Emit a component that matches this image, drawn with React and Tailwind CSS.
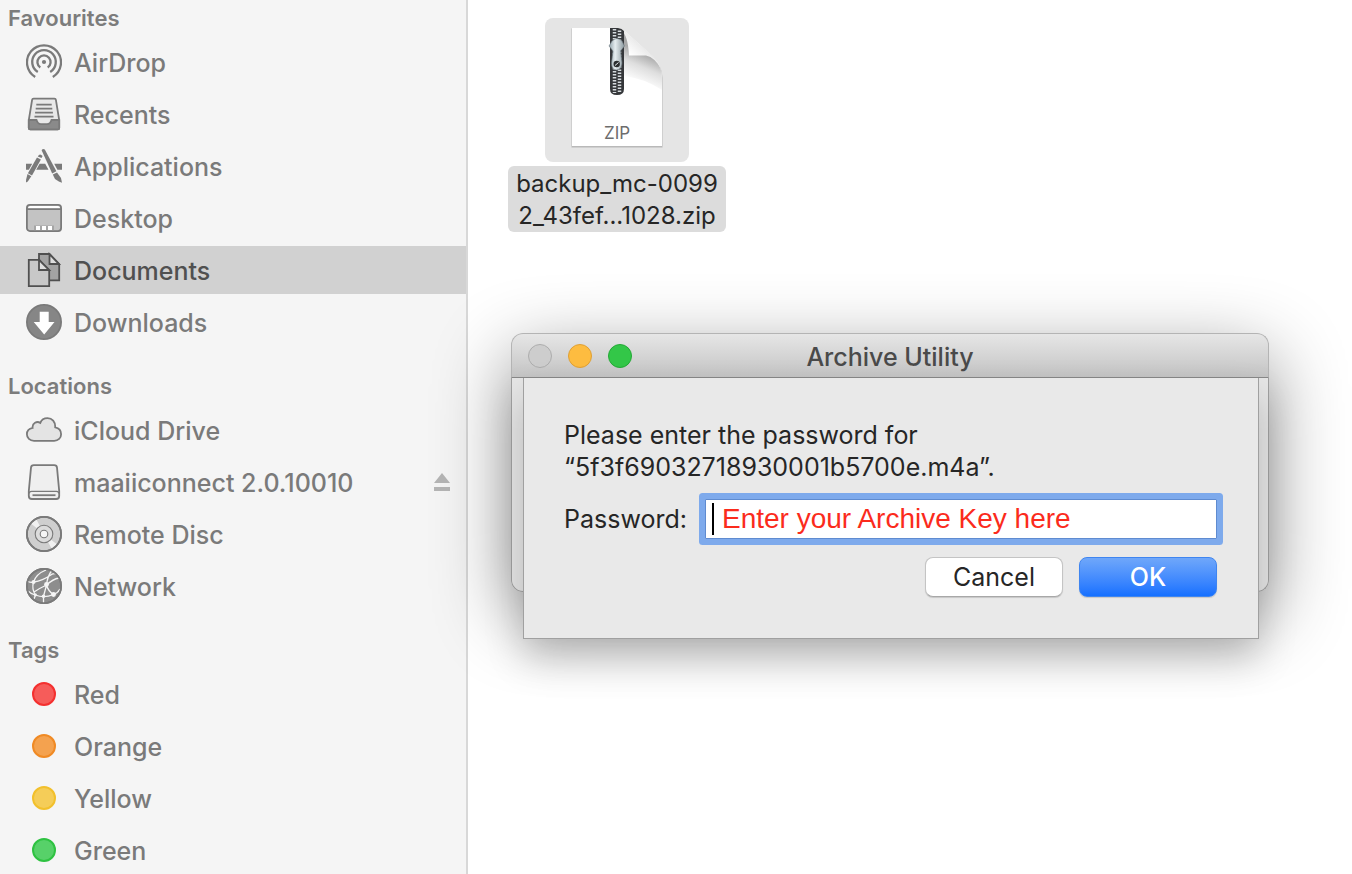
const favourites = [
  ["AirDrop", AirDropIcon],
  ["Recents", RecentsIcon],
  ["Applications", ApplicationsIcon],
  ["Desktop", DesktopIcon],
  ["Documents", DocumentsIcon],
  ["Downloads", DownloadsIcon]
];

const locations = [
  ["iCloud Drive", CloudIcon],
  ["maaiiconnect 2.0.10010", DriveIcon],
  ["Remote Disc", DiscIcon],
  ["Network", NetworkIcon]
];

const tags = [
  ["Red", "border-[#f4302f] bg-[#f65c5a]"],
  ["Orange", "border-[#f08a24] bg-[#f4a24f]"],
  ["Yellow", "border-[#f2c02c] bg-[#f5cd58]"],
  ["Green", "border-[#2ec241] bg-[#57d169]"]
];

function Icon({ children }) {
  return (
    <svg viewBox="0 0 36 36" className="size-9 shrink-0" fill="none" stroke="currentColor" strokeWidth="1.8" aria-hidden="true">
      {children}
    </svg>
  );
}

function AirDropIcon() {
  return (
    <Icon>
      <g strokeWidth="2.3">
        <path d="M9.2 32.9A17 17 0 1 1 26.8 32.9" />
        <path d="M11.8 28A11.8 11.8 0 1 1 24.2 28" />
        <path d="M14.3 23.5A6.6 6.6 0 1 1 21.7 23.5" />
      </g>
      <circle cx="18" cy="18" r="2.1" fill="currentColor" stroke="none" />
    </Icon>
  );
}

function RecentsIcon() {
  return (
    <Icon>
      <path d="M7.5 2.6h21q1.2 0 1.4 1.2L33.2 24v8q0 1.4-1.4 1.4H4.2Q2.8 33.4 2.8 32V24L6.1 3.8Q6.3 2.6 7.5 2.6Z" fill="#e9e9e9" />
      <path d="M2.8 24H10.5Q11.8 28.2 15 28.2h6q3.2 0 4.5-4.2h7.7v8q0 1.4-1.4 1.4H4.2Q2.8 33.4 2.8 32Z" fill="#8a8a8a" />
      <path d="M10.3 8.7h15.4M9.7 12.7h16.6M9.1 16.7h17.8M8.5 20.7h19" />
    </Icon>
  );
}

function ApplicationsIcon() {
  return (
    <Icon>
      <g fill="currentColor" stroke="none">
        <path d="M0 15.7h6.2L2.9 21.7H0ZM13.6 15.7h5.6l3.3 6H10.2ZM28.2 15.7H36v6h-4.6Z" />
        <path d="M15.6 2.2Q17 .2 18.8 1.6L30.4 23.2 26.2 25.5Z" />
        <path d="M26.8 26.6 31 24.4 35 30 36 34.8 32.8 33.4 29 31Z" />
        <path d="M12.7 7.2Q14.4 5.2 16.6 8.1L15.5 10.1 11.8 8.4Z" />
        <path d="M11 9.6 14.9 11.6 6 27.4 1.9 25.2Z" />
        <path d="M1.5 26.1 5.3 28.3 1.8 33.5 0 34.6.1 31.5Z" />
      </g>
    </Icon>
  );
}

function DesktopIcon() {
  return (
    <Icon>
      <rect x=".9" y="4.9" width="34.2" height="26.2" rx="3" fill="#c3c3c3" />
      <path d="M2 8.5Q2 6 4.5 6h27Q34 6 34 8.5Z" fill="#fff" stroke="none" />
      <path d="M1 9.2h34" />
      <path d="M8 30.2v-4.7h20v4.7Z" fill="#a5a5a5" stroke="none" />
      <path d="M10 26h4v4h-4ZM16 26h4v4h-4ZM22 26h4v4h-4Z" fill="#fff" stroke="none" />
    </Icon>
  );
}

function DocumentsIcon() {
  return (
    <Icon>
      <path d="M13 7.5V2h10.5L33.2 12v16.4H22V18Z" fill="#a3a3a3" />
      <path d="M23.5 2.2V12h9.5Z" fill="#dedede" />
      <path d="M2.8 7.8H13L23.2 18v16.2H2.8Z" fill="#c8c8c8" />
      <path d="M13 7.8V18h10.2Z" fill="#dedede" />
    </Icon>
  );
}

function DownloadsIcon() {
  return (
    <Icon>
      <circle cx="18" cy="18" r="17.1" fill="#868686" />
      <path d="M13.7 7.7h9v10.3h5.8L18.2 30.5 7.7 18h6Z" fill="#fff" stroke="none" />
    </Icon>
  );
}

function CloudIcon() {
  return (
    <Icon>
      <path
        d="M8 28.8C3.8 28.8.9 26 .9 22.3c0-3.4 2.3-5.8 5.7-6.4C6 11 11 8.7 14.3 10.9 15.5 7.7 18.3 6.1 21.5 6.1c4.6 0 8 3.6 7.7 9.2 3.8.7 5.9 3.4 5.9 6.9 0 3.8-2.9 6.6-6.9 6.6Z"
        fill="#e4e4e4"
      />
    </Icon>
  );
}

function DriveIcon() {
  return (
    <Icon>
      <path d="M7.8 1.2h20.4q2.6 0 2.8 2.4L33.2 27v5q0 3-3 3H5.8q-3 0-3-3v-5L5 3.6Q5.2 1.2 7.8 1.2Z" fill="#efefef" />
      <path d="M3 29.5Q3.2 27.3 5.5 27.3h25q2.3 0 2.5 2.2" strokeWidth="1.3" />
      <path d="M6.5 31.2h23" />
    </Icon>
  );
}

function DiscIcon() {
  return (
    <Icon>
      <circle cx="18" cy="18" r="17.1" fill="#cfcfcf" />
      <path d="M18 18 5.2 7.8 10.5 3.5ZM18 18 30.8 28.2 25.5 32.5Z" fill="#f1f1f1" stroke="none" />
      <circle cx="18" cy="18" r="17.1" />
      <circle cx="18" cy="18" r="8.8" fill="#dcdcdc" strokeWidth="1.1" />
      <circle cx="18" cy="18" r="3.8" fill="#f5f5f5" strokeWidth="1.1" />
    </Icon>
  );
}

function NetworkIcon() {
  return (
    <Icon>
      <circle cx="18" cy="18" r="17.1" fill="#8d8d8d" />
      <g stroke="#f5f5f5" strokeWidth="1.3">
        <path d="M2 13.5Q5 15 7.5 14Q10 6 20 2" />
        <path d="M7.5 14Q5.5 21 9.5 27Q18 30.5 27.5 26.5Q32 25 34 21" />
        <path d="M7.5 14Q17 12.5 24 7.5Q27 5 30 6M20.5 17Q21.5 8 25.5 3" />
        <path d="M20.5 17Q27 11 33 10M20.5 17Q22 23 27.5 26.5M20.5 17Q19 23 17.5 28.2V35M20.5 17Q14 20 8 24M2 23Q5 26 9.5 27L8 31" />
      </g>
      <g fill="#f5f5f5" stroke="none">
        <circle cx="7.5" cy="14" r="2" />
        <circle cx="20.5" cy="16.5" r="2.4" />
        <circle cx="9.5" cy="27" r="1.4" />
        <circle cx="17.5" cy="28.2" r="1.8" />
        <circle cx="27.5" cy="26.5" r="2.4" />
      </g>
      <circle cx="18" cy="18" r="17.1" />
    </Icon>
  );
}

function ZipIcon() {
  return (
    <svg viewBox="0 0 144 144" className="size-36" role="img" aria-label="ZIP archive">
      <defs>
        <linearGradient id="curl" x1="86" y1="38" x2="97" y2="26" gradientUnits="userSpaceOnUse">
          <stop offset="0" stopColor="#fff" />
          <stop offset="1" stopColor="#e8e8e8" />
        </linearGradient>
        <linearGradient id="shade" x1="102" y1="36" x2="90" y2="64" gradientUnits="userSpaceOnUse">
          <stop offset="0" stopColor="#a8a8a8" />
          <stop offset=".45" stopColor="#dedede" />
          <stop offset="1" stopColor="#fff" />
        </linearGradient>
        <linearGradient id="pull" x1="0" x2="1">
          <stop offset="0" stopColor="#8fa0a8" />
          <stop offset=".4" stopColor="#e6edf0" />
          <stop offset="1" stopColor="#8a979d" />
        </linearGradient>
      </defs>
      <path d="M26.5 10.5H72Q78 11 83 17L108 40Q117.5 48 117.5 60v69.5h-91Z" fill="#b9b9b9" />
      <path d="M27 10H72Q78 10.5 83 16L108 38.5Q117 47 117 60v68H27Z" fill="#fff" />
      <path d="M76 12Q80 13 83 17L108 39Q117 47 117 60V72Q98 60 79 58Z" fill="url(#shade)" />
      <path d="M76 12Q83 17 84 37.5L101 37.5Q110 39.5 116 51Q113.5 43.5 108 38.5L83 16Q80 13 76 12Z" fill="url(#curl)" />
      <path d="M65 10h8q4 .5 6 3v58q0 6-7 6t-7-6Z" fill="#35373a" />
      <path d="M69.5 11v64M74.5 12.5v62" stroke="#d5dadd" strokeWidth="3.5" strokeDasharray="1.5 1.5" />
      <path d="M67 23q5-5 10 0l2.5 5-4 5 1.5 12q-.5 7-5.5 7T66.5 45L68 33l-4-5Z" fill="url(#pull)" stroke="#6b777d" strokeWidth=".6" />
      <circle cx="71.7" cy="46" r="3.2" fill="#2c2e30" />
      <path d="M70 47.5 73.5 44.5" stroke="#e6edf0" />
      <text x="72" y="120.5" textAnchor="middle" className="fill-[#6d6d6d] font-['Inter',sans-serif] text-[17px]">ZIP</text>
    </svg>
  );
}

function SidebarSection({ title, children }) {
  return (
    <section>
      <h2 className="mb-0.5 flex h-9 items-center pl-2 text-[22px] font-semibold text-[#7c7c7c]">{title}</h2>
      <ul className="space-y-1">{children}</ul>
    </section>
  );
}

function SidebarItem({ label, icon, active, ejectable }) {
  return (
    <li className={`flex h-12 items-center font-medium ${active ? "bg-[#d1d1d1] text-[#505050]" : "text-[#7a7a7a]"}`}>
      <a href="#" className="flex grow items-center gap-3 pl-[26px] whitespace-nowrap">
        {icon}
        <span className="pt-0.5">{label}</span>
      </a>
      {ejectable && (
        <button type="button" aria-label={`Eject ${label}`} className="mr-4">
          <svg viewBox="0 0 16 18" className="h-[18px] w-4" fill="#b5b5b5">
            <path d="M8 0 16 10H0ZM0 14h16v4H0Z" />
          </svg>
        </button>
      )}
    </li>
  );
}

function PasswordSheet() {
  return (
    <form onSubmit={(e) => e.preventDefault()} className="-mb-12 grow border border-t-0 border-[#a0a0a0] bg-[#e9e9e9] py-[41px] pr-[41px] pl-10 shadow-[0_20px_36px_rgba(0,0,0,0.2)]">
      <p>
        Please enter the password for
        <br />
        “5f3f69032718930001b5700e.m4a”.
      </p>
      <div className="mt-4 flex h-10 items-center">
        <label htmlFor="password" className="w-[141px] shrink-0">Password:</label>
        <div className="flex h-full grow items-center rounded-[1px] border border-[#5f8bd0] bg-white pl-1.5 ring-6 ring-[#7eaaec]">
          <span className="h-8 w-0.5 bg-black" />
          <input
            id="password"
            type="text"
            defaultValue="Enter your Archive Key here"
            className="w-full min-w-0 bg-transparent pl-2 font-['Liberation_Sans',Arial,sans-serif] text-[28px] text-[#fb2b1c] outline-none"
          />
        </div>
      </div>
      <div className="mt-[18px] flex justify-end gap-4">
        <button type="button" className="h-10 w-[138px] rounded-lg border border-[#c4c4c4] border-b-[#a8a8a8] bg-white shadow-[0_1px_1px_rgba(0,0,0,0.15)]">Cancel</button>
        <button type="submit" className="h-10 w-[138px] rounded-lg border border-[#3f85f0] bg-linear-to-b from-[#6fa7fa] to-[#1470ff] font-medium text-white shadow-[0_1px_1px_rgba(0,0,0,0.15)]">OK</button>
      </div>
    </form>
  );
}

function ArchiveWindow() {
  return (
    <div role="dialog" aria-label="Archive Utility" className="relative mt-[101px] mr-[83px] ml-[43px] rounded-xl shadow-[0_24px_76px_rgba(0,0,0,0.46)]">
      <div className="grid h-[45px] grid-cols-[1fr_auto_1fr] items-center rounded-t-xl border border-[#b4b4b4] border-b-[#888] bg-linear-to-b from-[#e6e6e6] to-[#c4c4c4] px-4">
        <div className="flex gap-4">
          <button type="button" aria-label="Close" className="size-6 rounded-full border border-[#adadad] bg-[#cdcdcd]" />
          <button type="button" aria-label="Minimise" className="size-6 rounded-full border border-[#dfa035] bg-[#fdbc40]" />
          <button type="button" aria-label="Zoom" className="size-6 rounded-full border border-[#24a936] bg-[#33c748]" />
        </div>
        <h1 className="pt-0.5 font-medium text-[#4a4a4a]">Archive Utility</h1>
      </div>
      <div className="flex rounded-b-xl border border-t-0 border-[#a0a0a0] bg-[#e6e6e6] pr-[9px] pl-[11px]">
        <PasswordSheet />
      </div>
    </div>
  );
}

export default function App() {
  return (
    <div className="flex min-h-screen bg-white font-['Inter',sans-serif] text-[25px] leading-8 text-[#262626]">
      <nav className="w-[468px] shrink-0 space-y-[22px] border-r-2 border-[#d8d8d8] bg-[#f5f5f5]">
        <SidebarSection title="Favourites">
          {favourites.map(([label, ItemIcon]) => (
            <SidebarItem key={label} label={label} icon={<ItemIcon />} active={label === "Documents"} />
          ))}
        </SidebarSection>
        <SidebarSection title="Locations">
          {locations.map(([label, ItemIcon]) => (
            <SidebarItem key={label} label={label} icon={<ItemIcon />} ejectable={label.startsWith("maaii")} />
          ))}
        </SidebarSection>
        <SidebarSection title="Tags">
          {tags.map(([label, colors]) => (
            <SidebarItem key={label} label={label} icon={<span className={`mx-1.5 size-6 rounded-full border-2 ${colors}`} />} />
          ))}
        </SidebarSection>
      </nav>
      <main className="min-w-0 grow pt-[18px]">
        <figure className="ml-10 flex w-[218px] flex-col items-center gap-1">
          <div className="rounded-lg bg-[#e5e5e5]">
            <ZipIcon />
          </div>
          <figcaption className="w-full rounded-md bg-[#dcdcdc] pt-0.5 text-center text-[24px]">
            backup_mc-0099
            <br />
            2_43fef...1028.zip
          </figcaption>
        </figure>
        <ArchiveWindow />
      </main>
    </div>
  );
}
